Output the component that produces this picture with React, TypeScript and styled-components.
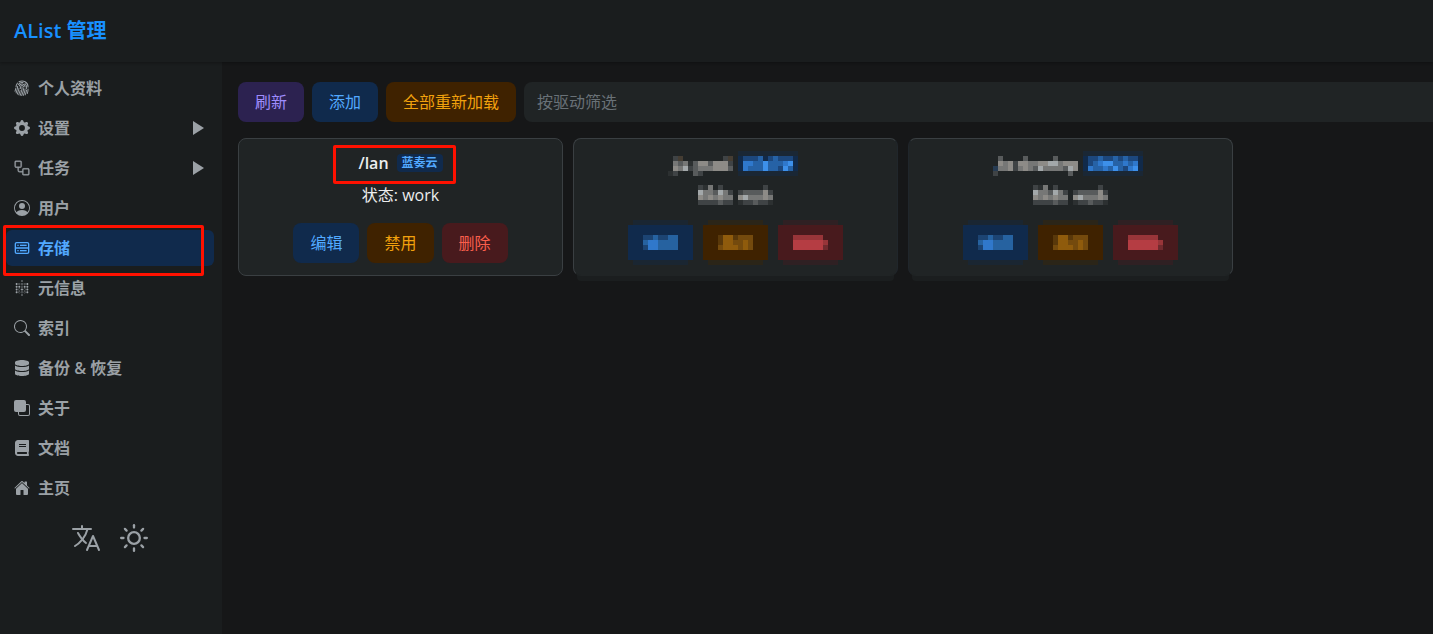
import React from "react";
import styled, { createGlobalStyle } from "styled-components";
import type { IconType } from "react-icons";
import {
  BsFingerprint,
  BsFront,
  BsGearFill,
  BsPersonCircle,
  BsSearch,
} from "react-icons/bs";
import { CgDatabase } from "react-icons/cg";
import { FaBook, FaDatabase } from "react-icons/fa";
import { FiSun } from "react-icons/fi";
import { GoWorkflow } from "react-icons/go";
import { IoHome, IoLanguageOutline } from "react-icons/io5";
import { SiMetabase } from "react-icons/si";

const GlobalStyle = createGlobalStyle`
  *, *::before, *::after { box-sizing: border-box; }
  body {
    margin: 0;
    background: #161718;
    color: #ecedee;
    font: 16px/24px "Open Sans", "Noto Sans CJK SC", sans-serif;
  }
  button, input { font: inherit; }
  svg { display: block; }
`;

type Tone = "accent" | "info" | "warning" | "danger";

const tones: Record<Tone, { bg: string; fg: string }> = {
  accent: { bg: "#2c2250", fg: "#9e8cfc" },
  info: { bg: "#102a4c", fg: "#52a9ff" },
  warning: { bg: "#3f2200", fg: "#f1a10d" },
  danger: { bg: "#481a1d", fg: "#fa5f4c" },
};

const Page = styled.div`
  display: flex;
  flex-direction: column;
  min-height: 100vh;
`;

const Header = styled.header`
  position: relative;
  z-index: 1;
  display: flex;
  align-items: center;
  height: 62px;
  padding: 0 14px;
  background: #1a1d1e;
  box-shadow: 0 1px 3px rgba(0, 0, 0, 0.3);
`;

const Brand = styled.h1`
  margin: 0;
  color: #1890ff;
  font-size: 20px;
  line-height: 28px;
  font-weight: 600;
`;

const Body = styled.div`
  display: flex;
  flex: 1;
`;

const Sidebar = styled.aside`
  flex: none;
  width: 222px;
  padding: 8px 8px 8px 6px;
  background: #1a1d1e;
`;

const Nav = styled.nav`
  display: flex;
  flex-direction: column;
  gap: 4px;
`;

const NavLink = styled.a<{ $active?: boolean }>`
  position: relative;
  display: flex;
  align-items: center;
  gap: 8px;
  height: 36px;
  padding: 0 10px 0 8px;
  border-radius: 6px;
  background: ${(p) => (p.$active ? tones.info.bg : "transparent")};
  color: ${(p) => (p.$active ? tones.info.fg : "#9ba1a6")};
  font-weight: 600;
  text-decoration: none;
`;

const NavLabel = styled.span`
  flex: 1;
`;

const BoldWorkflow = styled(GoWorkflow)`
  stroke: currentColor;
  stroke-width: 0.5px;
`;

const SidebarTools = styled.div`
  display: flex;
  justify-content: center;
  gap: 16px;
  padding-top: 16px;
`;

const ToolButton = styled.button`
  display: grid;
  place-items: center;
  width: 32px;
  height: 32px;
  padding: 0;
  border: 0;
  background: none;
  color: #9ba1a6;
`;

const Main = styled.main`
  flex: 1;
  min-width: 0;
  padding: 20px 0 16px 16px;
`;

const Toolbar = styled.div`
  display: flex;
  gap: 8px;
  margin-bottom: 16px;
`;

const Button = styled.button<{ $tone: Tone }>`
  flex: none;
  height: 40px;
  padding: 0 17px;
  border: 0;
  border-radius: 8px;
  background: ${(p) => tones[p.$tone].bg};
  color: ${(p) => tones[p.$tone].fg};
`;

const FilterInput = styled.input`
  flex: 1;
  min-width: 0;
  height: 40px;
  padding: 0 13px;
  border: 0;
  border-radius: 8px 0 0 8px;
  background: #202425;
  color: inherit;
  &::placeholder {
    color: #697177;
    opacity: 1;
  }
`;

const CardGrid = styled.div`
  display: grid;
  grid-template-columns: repeat(auto-fill, 325px);
  gap: 10px;
`;

const Card = styled.article<{ $faded?: "left" | "right" }>`
  display: flex;
  flex-direction: column;
  align-items: center;
  padding: 12px;
  border: 1px solid #3a3f42;
  border-radius: 8px;
  background: #202425;
  ${(p) =>
    p.$faded &&
    `
    border-bottom-color: #202425;
    border-${p.$faded}-color: #20262b;
    box-shadow: 0 9px 0 -4px #1b1e1f;
  `}
`;

const CardTitle = styled.h2`
  position: relative;
  display: flex;
  align-items: center;
  gap: 8px;
  height: 24px;
  margin: 0 0 8px;
  font-size: 16px;
  font-weight: 600;
`;

const Tag = styled.span`
  height: 18px;
  padding: 0 5px;
  border-radius: 4px;
  background: ${tones.info.bg};
  color: ${tones.info.fg};
  font-size: 12px;
  line-height: 18px;
  font-weight: 600;
`;

const Status = styled.div`
  display: flex;
  align-items: center;
  height: 24px;
  margin-bottom: 16px;
`;

const Actions = styled.div<{ $masked?: boolean }>`
  display: flex;
  gap: ${(p) => (p.$masked ? 10 : 8)}px;
  margin: ${(p) => (p.$masked ? "-3px 0 -2px" : "0")};
`;

const MaskedButton = styled.button`
  padding: 0;
  border: 0;
  background: none;
`;

const RedFrame = styled.span`
  position: absolute;
  border: 3px solid #ff1100;
  border-radius: 2px;
  pointer-events: none;
`;

const NavFrame = styled(RedFrame)`
  inset: -5px 10px -10px -3px;
`;

const TitleFrame = styled(RedFrame)`
  inset: -6px -13px -9px -25px;
`;

const BLOCK = 5;

const pageShades: Record<string, string> = {
  "1": "#2c3031",
  "2": "#3f4345",
  "3": "#585b5c",
  "4": "#767776",
  "5": "#8d8b87",
  "6": "#a3a8aa",
  w: "#453d33",
  i: "#263b52",
  n: "#1a2735",
  k: "#112a4a",
  l: "#1c477d",
  m: "#2662a6",
  o: "#2f78cc",
  p: "#3d90ea",
};

const buttonShades: Record<string, Record<string, string>> = {
  info: { r: "#1a2632", k: "#102a4c", a: "#1c4473", b: "#2662a0", c: "#3078cb" },
  warning: { r: "#2b2518", k: "#3f2200", a: "#59380a", b: "#744a0d", c: "#8f5b0c" },
  danger: { r: "#2f2023", k: "#481a1d", a: "#712a2e", b: "#983539", c: "#b53d43" },
};

function Mosaic({ rows, shades }: { rows: string[]; shades: Record<string, string> }) {
  const width = rows[0].length * BLOCK;
  const height = rows.length * BLOCK;
  return (
    <svg
      width={width}
      height={height}
      viewBox={`0 0 ${width} ${height}`}
      shapeRendering="crispEdges"
      aria-hidden="true"
    >
      {rows.flatMap((row, y) =>
        [...row].map((c, x) =>
          shades[c] ? (
            <rect
              key={`${x}-${y}`}
              x={x * BLOCK}
              y={y * BLOCK}
              width={BLOCK}
              height={BLOCK}
              fill={shades[c]}
            />
          ) : null,
        ),
      )}
    </svg>
  );
}

const statusRows = [
  "214 2        2 ",
  "6443642 2333352",
  "5454544 5644454",
  "2222322 1223221",
];

const buttonRows = (text: string[]) => [
  " rrrrrrrrrrr ",
  "kkkkkkkkkkkkk",
  "kkkkkkkkkkkkk",
  ...text.map((t) => `kkk${t}kkk`),
  "kkkkkkkkkkkkk",
  "kkkkkkkkkkkkk",
  " rrrrrrrrrrr ",
];

const maskedActions = [
  { label: "编辑", tone: "info", text: ["aabaabb", "bccbbbb", "accbbbb"] },
  { label: "禁用", tone: "warning", text: ["accabbb", "accbbcb", "bcccbcb"] },
  { label: "删除", tone: "danger", text: ["bbbbbbk", "ccccccb", "cccccca"] },
];

const maskedCards: { faded: "left" | "right"; title: string[] }[] = [
  {
    faded: "right",
    title: [
      "              nnnnnnnnnnnn ",
      " 2w        2w klllmklmlllk ",
      " 434135535552 koommpmmmopk ",
      " 546234445553 kommmpmmlpmk ",
      "12   32       nnnnnnnnnnnn ",
    ],
  },
  {
    faded: "left",
    title: [
      "                  nnnnnnnnnnnn ",
      " 3    3     3     kllmllmlmllk ",
      " 5452554455664555 klmoppmmomok ",
      "i4452454364444365 kommompmlopk ",
      "2              3  nnnnnnnnnnnn ",
    ],
  },
];

const navItems: { label: string; icon: IconType; nested?: boolean; active?: boolean }[] = [
  { label: "个人资料", icon: BsFingerprint },
  { label: "设置", icon: BsGearFill, nested: true },
  { label: "任务", icon: BoldWorkflow as unknown as IconType, nested: true },
  { label: "用户", icon: BsPersonCircle },
  { label: "存储", icon: CgDatabase, active: true },
  { label: "元信息", icon: SiMetabase },
  { label: "索引", icon: BsSearch },
  { label: "备份 & 恢复", icon: FaDatabase },
  { label: "关于", icon: BsFront },
  { label: "文档", icon: FaBook },
  { label: "主页", icon: IoHome },
];

function Caret() {
  return (
    <svg width="11" height="14" viewBox="0 0 11 14" fill="currentColor" aria-hidden="true">
      <path d="M0 0 11 7 0 14Z" />
    </svg>
  );
}

export default function App() {
  return (
    <>
      <GlobalStyle />
      <Page>
        <Header>
          <Brand>AList 管理</Brand>
        </Header>
        <Body>
          <Sidebar>
            <Nav>
              {navItems.map(({ label, icon: Icon, nested, active }) => (
                <NavLink key={label} href="#" $active={active}>
                  <Icon size={16} />
                  <NavLabel>{label}</NavLabel>
                  {nested && <Caret />}
                  {active && <NavFrame />}
                </NavLink>
              ))}
            </Nav>
            <SidebarTools>
              <ToolButton aria-label="Language">
                <IoLanguageOutline size={32} />
              </ToolButton>
              <ToolButton aria-label="Theme">
                <FiSun size={28} />
              </ToolButton>
            </SidebarTools>
          </Sidebar>
          <Main>
            <Toolbar>
              <Button $tone="accent">刷新</Button>
              <Button $tone="info">添加</Button>
              <Button $tone="warning">全部重新加载</Button>
              <FilterInput aria-label="按驱动筛选" placeholder="按驱动筛选" />
            </Toolbar>
            <CardGrid>
              <Card>
                <CardTitle>
                  /lan <Tag>蓝奏云</Tag>
                  <TitleFrame />
                </CardTitle>
                <Status>状态: work</Status>
                <Actions>
                  <Button $tone="info">编辑</Button>
                  <Button $tone="warning">禁用</Button>
                  <Button $tone="danger">删除</Button>
                </Actions>
              </Card>
              {maskedCards.map((card) => (
                <Card key={card.faded} $faded={card.faded}>
                  <CardTitle>
                    <Mosaic rows={card.title} shades={pageShades} />
                  </CardTitle>
                  <Status>
                    <Mosaic rows={statusRows} shades={pageShades} />
                  </Status>
                  <Actions $masked>
                    {maskedActions.map((a) => (
                      <MaskedButton key={a.tone} aria-label={a.label}>
                        <Mosaic rows={buttonRows(a.text)} shades={buttonShades[a.tone]} />
                      </MaskedButton>
                    ))}
                  </Actions>
                </Card>
              ))}
            </CardGrid>
          </Main>
        </Body>
      </Page>
    </>
  );
}
